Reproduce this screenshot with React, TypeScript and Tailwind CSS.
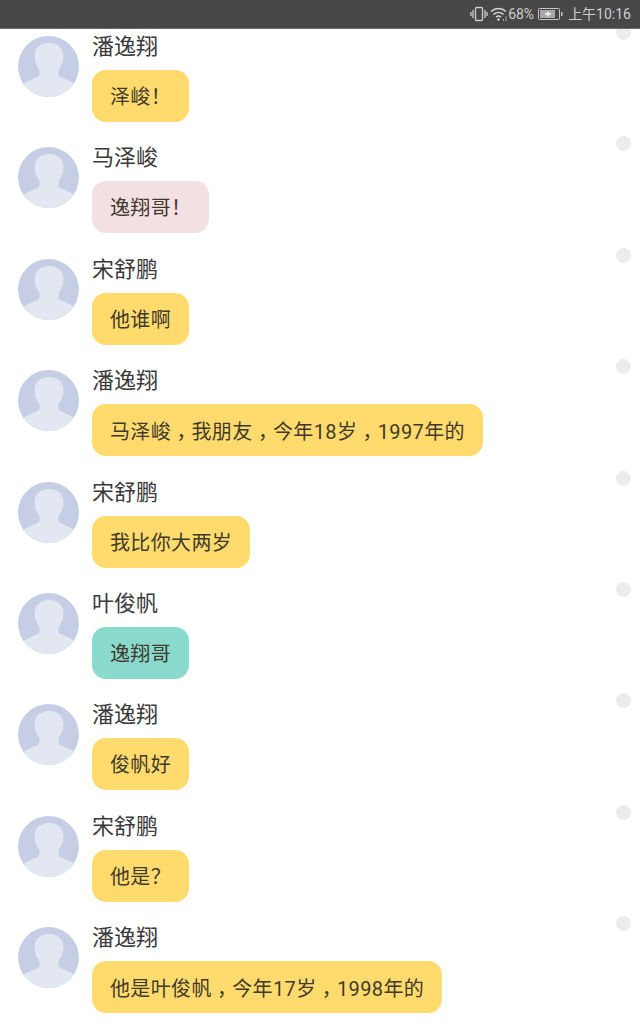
import React from "react";

const YELLOW = "bg-[#ffdb6e]";
const PINK = "bg-[#f3e0e2]";
const TEAL = "bg-[#8ad9cd]";

const messages = [
  { name: "潘逸翔", text: "泽峻！", color: YELLOW },
  { name: "马泽峻", text: "逸翔哥！", color: PINK },
  { name: "宋舒鹏", text: "他谁啊", color: YELLOW },
  { name: "潘逸翔", text: "马泽峻，我朋友，今年18岁，1997年的", color: YELLOW },
  { name: "宋舒鹏", text: "我比你大两岁", color: YELLOW },
  { name: "叶俊帆", text: "逸翔哥", color: TEAL },
  { name: "潘逸翔", text: "俊帆好", color: YELLOW },
  { name: "宋舒鹏", text: "他是？", color: YELLOW },
  { name: "潘逸翔", text: "他是叶俊帆，今年17岁，1998年的", color: YELLOW },
];

function Avatar() {
  return (
    <svg width="61" height="61" viewBox="0 0 61 61" className="shrink-0">
      <defs>
        <clipPath id="avatar-clip">
          <circle cx="30.5" cy="30.5" r="30.5" />
        </clipPath>
      </defs>
      <g clipPath="url(#avatar-clip)">
        <rect width="61" height="61" fill="#c5cee4" />
        <path
          d="M31 7c-8.500 0-14.500 5-14.500 13 0 5 1.500 9 4 12.500 1.300 2 1.500 5 .5 7.500-1.500 1.500-11 4.500-16 8.500v13h52v-13c-5-4-14.500-7-16-8.500-1-2.500-.8-5.500.5-7.500 2.500-3.500 4-7.500 4-12.500 0-8-6-13-14.500-13z"
          fill="#e3e7f2"
        />
      </g>
    </svg>
  );
}

function StatusIcons() {
  return (
    <>
      <svg width="18" height="16" viewBox="0 0 18 16" fill="none" stroke="#d0d0d0" strokeWidth="1.300">
        <rect x="5.500" y="1.500" width="7" height="13" rx="1" />
        <path d="M3 4v8M1 6v4M15 4v8M17 6v4" />
      </svg>
      <svg width="19" height="16" viewBox="0 0 19 16" fill="none" stroke="#d8d8d8" strokeWidth="1.600" className="ml-[2px]">
        <path d="M1 5.500c4.500-4 10.500-4 15 0M3.500 8.500c3-2.700 7-2.700 10 0M6 11c1.600-1.300 3.400-1.300 5 0" />
        <circle cx="8.500" cy="13.500" r="1.200" fill="#d8d8d8" stroke="none" />
        <path d="M13 14h1M15.500 14h1M15.500 11.500h1" />
      </svg>
      <span className="ml-[-1px]">68%</span>
      <svg width="25" height="14" viewBox="0 0 25 14" fill="none" className="ml-[4px]">
        <rect x="0.500" y="1.500" width="21" height="11" rx="1" stroke="#c4c4c4" />
        <rect x="2" y="3" width="15" height="8" fill="#a8a8a8" />
        <path d="M7 7h6M10 4.500v5" stroke="#f4f4f4" strokeWidth="1.500" />
        <rect x="23" y="5" width="1.500" height="4" fill="#c4c4c4" />
      </svg>
      <span className="ml-[5px]">上午10:16</span>
    </>
  );
}

// commas sit mid-cell in the original font: TC centres them, then drop to the baseline
function BubbleText({ text }: { text: string }) {
  const parts = text.split("，");
  return (
    <>
      {parts.map((part, i) => (
        <React.Fragment key={i}>
          {part}
          {i < parts.length - 1 && (
            <span className="inline-block translate-y-[6px] font-['Noto_Sans_CJK_TC',sans-serif]">，</span>
          )}
        </React.Fragment>
      ))}
    </>
  );
}

export default function App() {
  return (
    <div className="h-[1024px] w-[640px] overflow-hidden bg-white font-['Roboto','Noto_Sans_CJK_SC',sans-serif]">
      <div className="relative z-10 flex h-[29px] items-center justify-end border-b border-[#6a6a6a] bg-[#474747] pr-[9px] text-[14px] text-[#cfcfcf]">
        <StatusIcons />
      </div>
      <div className="-mt-[4px]">
        {messages.map((m, i) => (
          <div key={i} className="flex h-[111.375px] pl-[18px] pr-[9px] pt-[11px]">
            <Avatar />
            <div className="ml-[13px] flex-1">
              <div className="-mt-[2px] text-[22px] leading-[26px] text-[#3a3a3a]">{m.name}</div>
              <div className={`mt-[10px] inline-block h-[52px] rounded-[14px] px-[18px] text-[20px] leading-[54px] tracking-[0.37px] text-[#3f3a2c] ${m.color}`}>
                <BubbleText text={m.text} />
              </div>
            </div>
            <div className="-mt-[11px] h-[15px] w-[15px] shrink-0 rounded-full bg-[#ececec]" />
          </div>
        ))}
      </div>
    </div>
  );
}
